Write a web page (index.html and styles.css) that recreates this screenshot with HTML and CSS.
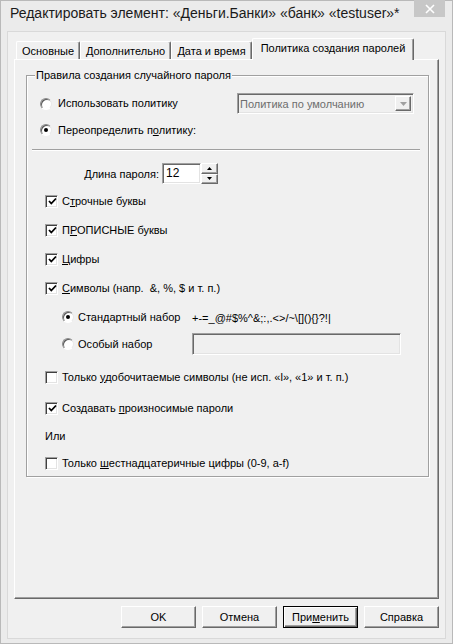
FILE: index.html
```html
<!DOCTYPE html>
<html lang="ru">
<head>
<meta charset="utf-8">
<title>Редактировать элемент</title>
<link rel="stylesheet" href="styles.css">
</head>
<body>
<div class="window">
  <div class="titlebar">
    <span class="title">Редактировать элемент: «Деньги.Банки» «банк» «testuser»*</span>
    <div class="close">
      <svg width="10" height="10" viewBox="0 0 10 10"><path d="M1 1 L9 9 M9 1 L1 9" stroke="#fff" stroke-width="1.6" fill="none"/></svg>
    </div>
  </div>
  <div class="client">
    <div class="tabs">
      <div class="tab t1">Основные</div>
      <div class="tab t2">Дополнительно</div>
      <div class="tab t3">Дата и время</div>
      <div class="tab active">Политика создания паролей</div>
    </div>
    <div class="panel">
      <div class="group">
        <div class="legend">Правила создания случайного пароля</div>

        <div class="row r-policy">
          <span class="radio"></span>
          <span class="lbl">Использовать политику</span>
          <div class="combo">
            <span class="combo-text">Политика по умолчанию</span>
            <span class="combo-btn"><svg width="7" height="4" viewBox="0 0 7 4"><path d="M0 0 H7 L3.5 4 Z" fill="#a0a0a0"/></svg></span>
          </div>
        </div>

        <div class="row r-override">
          <span class="radio on"></span>
          <span class="lbl">Переопределить п<u>о</u>литику:</span>
        </div>

        <div class="sep"></div>

        <div class="row r-len">
          <span class="len-label">Длина пароля:</span>
          <div class="edit spin-edit">12</div>
          <div class="spin">
            <span class="spin-btn"><svg width="5" height="3" viewBox="0 0 5 3"><path d="M0 3 H5 L2.5 0 Z" fill="#000"/></svg></span>
            <span class="spin-btn"><svg width="5" height="3" viewBox="0 0 5 3"><path d="M0 0 H5 L2.5 3 Z" fill="#000"/></svg></span>
          </div>
        </div>

        <div class="row cbrow r-c1">
          <span class="cb on"><svg width="9" height="9" viewBox="0 0 9 9"><path d="M1 4 L3.3 6.5 L8 1.5" stroke="#000" stroke-width="1.8" fill="none"/></svg></span>
          <span class="lbl">С<u>т</u>рочные буквы</span>
        </div>
        <div class="row cbrow r-c">
          <span class="cb on"><svg width="9" height="9" viewBox="0 0 9 9"><path d="M1 4 L3.3 6.5 L8 1.5" stroke="#000" stroke-width="1.8" fill="none"/></svg></span>
          <span class="lbl">П<u>Р</u>ОПИСНЫЕ буквы</span>
        </div>
        <div class="row cbrow r-c">
          <span class="cb on"><svg width="9" height="9" viewBox="0 0 9 9"><path d="M1 4 L3.3 6.5 L8 1.5" stroke="#000" stroke-width="1.8" fill="none"/></svg></span>
          <span class="lbl"><u>Ц</u>ифры</span>
        </div>
        <div class="row cbrow r-c">
          <span class="cb on"><svg width="9" height="9" viewBox="0 0 9 9"><path d="M1 4 L3.3 6.5 L8 1.5" stroke="#000" stroke-width="1.8" fill="none"/></svg></span>
          <span class="lbl"><u>С</u>имволы (напр. &nbsp;&amp;, %, $ и т. п.)</span>
        </div>

        <div class="row subrow r-c">
          <div class="subopt">
            <span class="radio on"></span>
            <span class="lbl">Стандартный набор</span>
          </div>
          <span class="charset">+-=_@#$%^&amp;;:,.&lt;&gt;/~\[](){}?!|</span>
        </div>
        <div class="row subrow r-custom">
          <div class="subopt">
            <span class="radio"></span>
            <span class="lbl">Особый набор</span>
          </div>
          <div class="edit custom-edit"></div>
        </div>

        <div class="row cbrow r-read">
          <span class="cb"></span>
          <span class="lbl">Только <u>у</u>добочитаемые символы (не исп. «l», «1» и т. п.)</span>
        </div>
        <div class="row cbrow r-pron">
          <span class="cb on"><svg width="9" height="9" viewBox="0 0 9 9"><path d="M1 4 L3.3 6.5 L8 1.5" stroke="#000" stroke-width="1.8" fill="none"/></svg></span>
          <span class="lbl">Создавать <u>п</u>роизносимые пароли</span>
        </div>
        <div class="row cbrow r-or">
          <span class="lbl">Или</span>
        </div>
        <div class="row cbrow r-hex">
          <span class="cb"></span>
          <span class="lbl">Только <u>ш</u>естнадцатеричные цифры (0-9, a-f)</span>
        </div>
      </div>
    </div>
    <div class="buttons">
      <div class="btn">OK</div>
      <div class="btn">Отмена</div>
      <div class="btn default">При<u>м</u>енить</div>
      <div class="btn">Справка</div>
    </div>
  </div>
</div>
</body>
</html>
```

FILE: styles.css
```css
html, body {
  margin: 0;
  padding: 0;
  background: #ebebeb;
}
body {
  font-family: "Liberation Sans", Arial, sans-serif;
  font-size: 11px;
  color: #000;
}
u {
  text-decoration: underline;
  text-underline-offset: 1px;
}
.window {
  width: 453px;
  height: 644px;
  box-sizing: border-box;
  background: #ebebeb;
  border: 1px solid #b9b9b9;
  display: flex;
  flex-direction: column;
}
.titlebar {
  height: 30px;
  display: flex;
  align-items: flex-start;
  justify-content: space-between;
  flex-shrink: 0;
}
.title {
  font-size: 14px;
  line-height: 16px;
  margin: 4px 0 0 9px;
  color: #1a1a1a;
  white-space: nowrap;
}
.close {
  width: 31px;
  height: 17px;
  margin-top: -1px;
  margin-right: 7px;
  background: #c7c7c7;
  display: flex;
  align-items: center;
  justify-content: center;
}
.client {
  margin-left: 6px;
  width: 439px;
  height: 608px;
  box-sizing: border-box;
  border: 1px solid #d9d9d9;
  background: #f0f0f0;
  display: flex;
  flex-direction: column;
}
.tabs {
  height: 27px;
  box-sizing: border-box;
  padding-left: 8px;
  display: flex;
  align-items: flex-end;
  flex-shrink: 0;
}
.tab {
  height: 18px;
  box-sizing: border-box;
  border-top: 1px solid #fff;
  border-left: 1px solid #fff;
  border-right: 1px solid #696969;
  box-shadow: inset -1px 0 0 #a0a0a0;
  border-radius: 2px 2px 0 0;
  display: flex;
  align-items: center;
  justify-content: center;
  padding-top: 1px;
  white-space: nowrap;
}
.t1 { width: 64px; }
.t2 { width: 91px; }
.t3 { width: 81px; }
.tab.active {
  width: 162px;
  height: 22px;
  margin-bottom: -1px;
  background: #f0f0f0;
  position: relative;
  z-index: 1;
  padding-top: 0;
  padding-bottom: 3px;
}
.panel {
  margin-left: 6px;
  width: 425px;
  height: 540px;
  box-sizing: border-box;
  border-top: 1px solid #fff;
  border-left: 1px solid #fff;
  border-right: 1px solid #696969;
  border-bottom: 1px solid #696969;
  box-shadow: inset -1px -1px 0 #a0a0a0;
  flex-shrink: 0;
}
.group {
  margin: 15px 0 0 11px;
  width: 403px;
  height: 402px;
  box-sizing: border-box;
  border: 1px solid #a0a0a0;
  box-shadow: inset 1px 1px 0 #fff, 1px 1px 0 #fff;
  display: flex;
  flex-direction: column;
}
.legend {
  height: 13px;
  line-height: 13px;
  margin: -7px 0 -6px 8px;
  padding: 0 1px;
  background: #f0f0f0;
  align-self: flex-start;
  white-space: nowrap;
}
.row {
  display: flex;
  align-items: center;
  height: 20px;
  white-space: nowrap;
}
.lbl {
  line-height: 13px;
}
.radio {
  width: 12px;
  height: 12px;
  box-sizing: border-box;
  border-radius: 50%;
  border: 1px solid;
  border-color: #8a8a8a #e8e8e8 #ffffff #8a8a8a;
  background: #fff;
  box-shadow: inset 1px 1px 0 #5a5a5a;
  display: flex;
  align-items: center;
  justify-content: center;
  flex-shrink: 0;
}
.radio.on::after {
  content: "";
  width: 4px;
  height: 4px;
  border-radius: 50%;
  background: #000;
}
.r-policy {
  margin-top: 17px;
  height: 21px;
  padding-left: 13px;
  padding-right: 14px;
}
.r-policy .lbl, .r-override .lbl {
  margin-left: 6px;
}
.combo {
  margin-left: auto;
  width: 177px;
  height: 21px;
  box-sizing: border-box;
  border: 1px solid;
  border-color: #a0a0a0 #fff #fff #a0a0a0;
  box-shadow: inset 1px 1px 0 #696969, inset -1px -1px 0 #e3e3e3;
  background: #f0f0f0;
  display: flex;
  align-items: center;
  padding: 0 2px 0 2px;
}
.combo-text {
  color: #6d6d6d;
  flex: 1;
}
.combo-btn {
  width: 16px;
  height: 15px;
  box-sizing: border-box;
  border: 1px solid;
  border-color: #fff #696969 #696969 #fff;
  box-shadow: inset -1px -1px 0 #a0a0a0;
  display: flex;
  align-items: center;
  justify-content: center;
}
.r-override {
  margin-top: 6px;
  padding-left: 13px;
}
.sep {
  margin: 9px 0 0 5px;
  width: 388px;
  height: 1px;
  background: #a0a0a0;
  border-bottom: 1px solid #fff;
  flex-shrink: 0;
}
.r-len {
  margin-top: 12px;
  height: 21px;
}
.len-label {
  width: 132px;
  text-align: right;
  margin-right: 3px;
}
.edit {
  box-sizing: border-box;
  border: 1px solid;
  border-color: #a0a0a0 #fff #fff #a0a0a0;
  box-shadow: inset 1px 1px 0 #696969, inset -1px -1px 0 #e3e3e3;
  background: #fff;
}
.spin-edit {
  width: 39px;
  height: 21px;
  font-size: 12px;
  line-height: 19px;
  padding-left: 3px;
}
.spin {
  width: 17px;
  height: 21px;
  display: flex;
  flex-direction: column;
}
.spin-btn {
  flex: 1;
  box-sizing: border-box;
  border: 1px solid;
  border-color: #fff #696969 #696969 #fff;
  box-shadow: inset -1px -1px 0 #a0a0a0;
  background: #f0f0f0;
  display: flex;
  align-items: center;
  justify-content: center;
}
.cbrow {
  padding-left: 18px;
}
.cb {
  width: 13px;
  height: 13px;
  box-sizing: border-box;
  border: 1px solid;
  border-color: #a0a0a0 #fff #fff #a0a0a0;
  box-shadow: inset 1px 1px 0 #404040, inset -1px -1px 0 #e3e3e3;
  background: #fff;
  margin-right: 4px;
  display: flex;
  align-items: center;
  justify-content: center;
  flex-shrink: 0;
}
.cb svg {
  margin: 1px 0 0 1px;
}
.r-c1 { margin-top: 7px; }
.r-c { margin-top: 9px; }
.subrow {
  padding-left: 35px;
}
.subopt {
  width: 130px;
  display: flex;
  align-items: center;
}
.subopt .lbl {
  margin-left: 4px;
}
.charset {
  margin-top: 2px;
}
.r-custom {
  margin-top: 6px;
  height: 22px;
}
.custom-edit {
  width: 209px;
  height: 22px;
  background: #f0f0f0;
}
.r-read { margin-top: 12px; }
.r-pron { margin-top: 11px; }
.r-or { margin-top: 8px; }
.r-hex { margin-top: 7px; }
.buttons {
  margin-top: 7px;
  height: 22px;
  display: flex;
  justify-content: flex-end;
  gap: 6px;
  padding-right: 6px;
  flex-shrink: 0;
}
.btn {
  width: 75px;
  height: 22px;
  box-sizing: border-box;
  border: 1px solid;
  border-color: #fff #696969 #696969 #fff;
  box-shadow: inset -1px -1px 0 #a0a0a0;
  background: #f0f0f0;
  display: flex;
  align-items: center;
  justify-content: center;
}
.btn.default {
  border-color: #000;
  box-shadow: inset 1px 1px 0 #fff, inset -1px -1px 0 #696969, inset -2px -2px 0 #a0a0a0;
}
```
